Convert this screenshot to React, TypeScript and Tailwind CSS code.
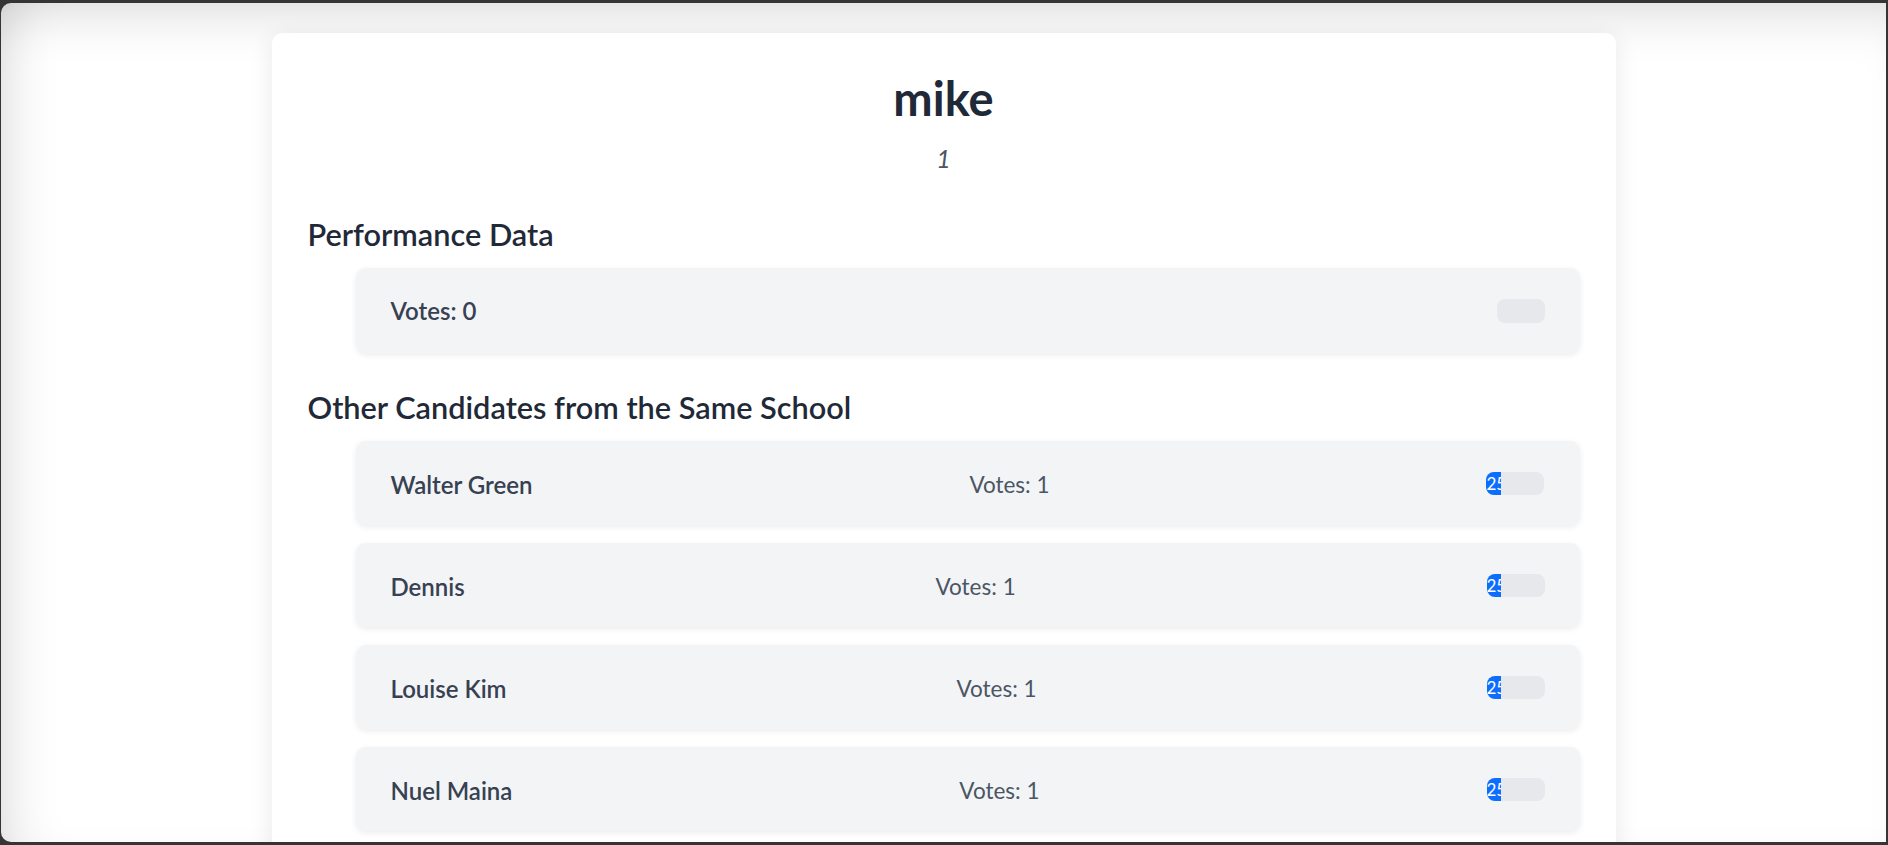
import React from 'react';

const candidates = [
  { name: 'Walter Green', votes: 1, pct: 25 },
  { name: 'Dennis', votes: 1, pct: 25 },
  { name: 'Louise Kim', votes: 1, pct: 25 },
  { name: 'Nuel Maina', votes: 1, pct: 25 },
];

function Bar({ pct, wide }: { pct: number; wide?: boolean }) {
  return (
    <div
      className={
        wide
          ? 'h-[23px] w-[58px] overflow-hidden rounded-[8px] bg-[#e6e8eb]'
          : 'h-[24px] w-[48px] overflow-hidden rounded-[8px] bg-[#e6e8eb]'
      }
    >
      {pct > 0 && (
        <div
          className="h-full overflow-hidden whitespace-nowrap bg-[#0d6efd] text-[17px] leading-[23px] text-white"
          style={{ width: `${pct}%` }}
        >
          {pct}%
        </div>
      )}
    </div>
  );
}

export default function App() {
  return (
    <div
      className="h-screen w-full overflow-hidden bg-[#353535] pt-[3px] pr-[2px] pb-[3px] pl-px"
      style={{ fontFamily: '"Segoe UI", Lato, "Noto Sans", sans-serif' }}
    >
      <div className="h-full overflow-hidden rounded-l-[10px] bg-white shadow-[inset_0_44px_50px_-30px_rgba(0,0,0,0.12),inset_40px_0_50px_-30px_rgba(0,0,0,0.12)]">
        {/* Main card */}
        <div className="mx-auto mt-[30px] w-[1344px] rounded-[10px] bg-white px-[36px] pt-[40px] pb-10 shadow-[0_4px_24px_rgba(0,0,0,0.09)]">
          <h1 className="text-center text-[47px] leading-[50px] font-bold text-[#1f2937]">mike</h1>
          <p className="mt-[20px] text-center text-[25px] leading-[30px] italic text-[#4b5563]">1</p>

          <h2 className="mt-[44px] text-[30.7px] leading-[36px] font-semibold text-[#1f2937]">Performance Data</h2>
          <div className="mt-[15px] ml-[48px] flex h-[85px] items-center justify-between rounded-[10px] bg-[#f3f4f6] px-[35px] shadow-[0_2px_6px_rgba(0,0,0,0.08)]">
            <span className="text-[24px] font-semibold text-[#374151]">Votes: 0</span>
            <Bar pct={0} />
          </div>

          <h2 className="mt-[37px] text-[30.7px] leading-[36px] font-semibold text-[#1f2937]">
            Other Candidates from the Same School
          </h2>
          <div className="mt-[15px] ml-[48px] flex flex-col gap-[18px]">
            {candidates.map((c) => (
              <div
                key={c.name}
                className="flex h-[84px] items-center justify-between rounded-[10px] bg-[#f3f4f6] px-[35px] shadow-[0_2px_6px_rgba(0,0,0,0.08)]"
              >
                <span className="pt-[3px] text-[24px] font-semibold text-[#374151]">{c.name}</span>
                <span className="pt-[3px] text-[22.5px] text-[#4b5563]">Votes: {c.votes}</span>
                <Bar pct={c.pct} wide />
              </div>
            ))}
          </div>
        </div>
      </div>
    </div>
  );
}
